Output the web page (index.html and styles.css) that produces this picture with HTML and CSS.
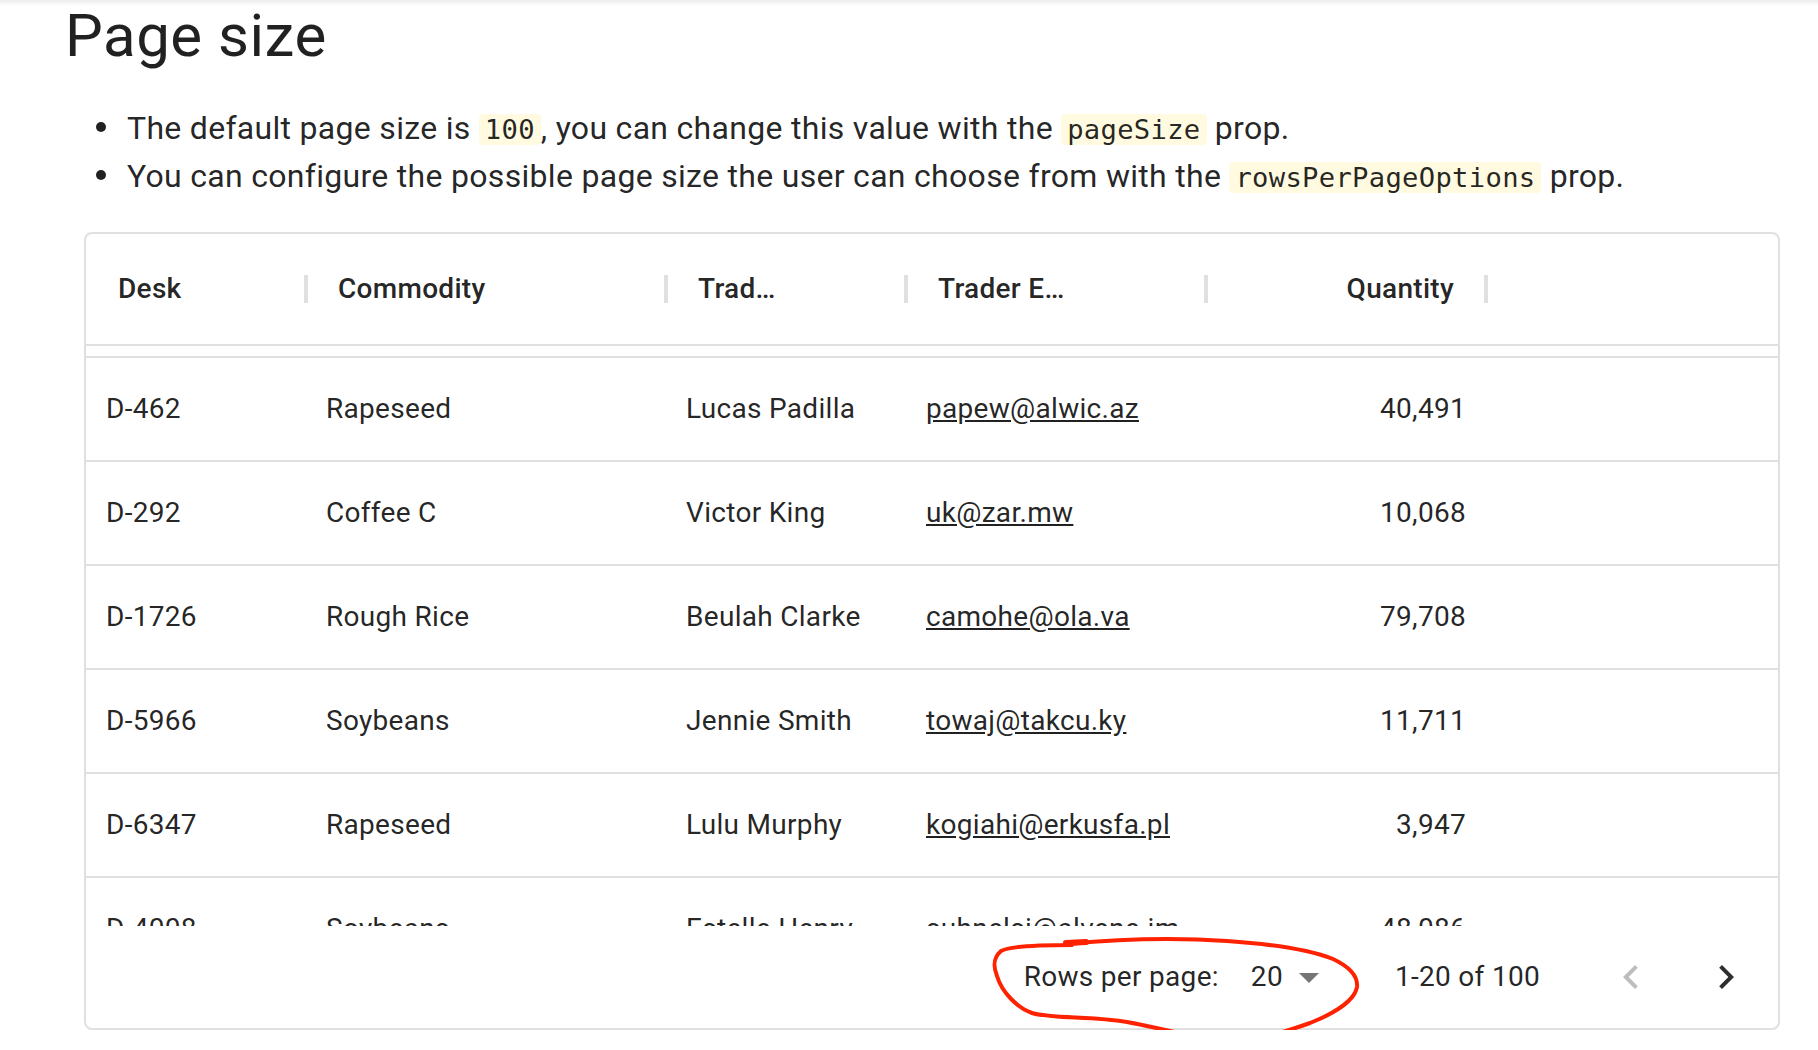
FILE: index.html
```html
<!DOCTYPE html>
<html lang="en">
<head>
<meta charset="utf-8">
<title>Page size</title>
<link rel="stylesheet" href="styles.css">
</head>
<body>
<main class="page">
  <h2 class="title">Page size</h2>
  <ul class="notes">
    <li>The default page size is <code>100</code>, you can change this value with the <code>pageSize</code> prop.</li>
    <li>You can configure the possible page size the user can choose from with the <code>rowsPerPageOptions</code> prop.</li>
  </ul>

  <div class="grid">
    <div class="grid-header">
      <div class="hcell col-desk"><span class="htitle">Desk</span></div>
      <div class="hcell col-commodity"><span class="htitle">Commodity</span></div>
      <div class="hcell col-name"><span class="htitle">Trad…</span></div>
      <div class="hcell col-email"><span class="htitle">Trader E…</span></div>
      <div class="hcell col-qty num"><span class="htitle">Quantity</span></div>
    </div>

    <div class="viewport">
      <div class="row row-stub"></div>
      <div class="row">
        <div class="cell col-desk">D-462</div>
        <div class="cell col-commodity">Rapeseed</div>
        <div class="cell col-name">Lucas Padilla</div>
        <div class="cell col-email"><a href="#">papew@alwic.az</a></div>
        <div class="cell col-qty num">40,491</div>
      </div>
      <div class="row">
        <div class="cell col-desk">D-292</div>
        <div class="cell col-commodity">Coffee C</div>
        <div class="cell col-name">Victor King</div>
        <div class="cell col-email"><a href="#">uk@zar.mw</a></div>
        <div class="cell col-qty num">10,068</div>
      </div>
      <div class="row">
        <div class="cell col-desk">D-1726</div>
        <div class="cell col-commodity">Rough Rice</div>
        <div class="cell col-name">Beulah Clarke</div>
        <div class="cell col-email"><a href="#">camohe@ola.va</a></div>
        <div class="cell col-qty num">79,708</div>
      </div>
      <div class="row">
        <div class="cell col-desk">D-5966</div>
        <div class="cell col-commodity">Soybeans</div>
        <div class="cell col-name">Jennie Smith</div>
        <div class="cell col-email"><a href="#">towaj@takcu.ky</a></div>
        <div class="cell col-qty num">11,711</div>
      </div>
      <div class="row">
        <div class="cell col-desk">D-6347</div>
        <div class="cell col-commodity">Rapeseed</div>
        <div class="cell col-name">Lulu Murphy</div>
        <div class="cell col-email"><a href="#">kogiahi@erkusfa.pl</a></div>
        <div class="cell col-qty num">3,947</div>
      </div>
      <div class="row">
        <div class="cell col-desk">D-4008</div>
        <div class="cell col-commodity">Soybeans</div>
        <div class="cell col-name">Estelle Henry</div>
        <div class="cell col-email"><a href="#">suhnelsi@alvene.im</a></div>
        <div class="cell col-qty num">48,086</div>
      </div>
    </div>

    <div class="footer">
      <span class="rpp-label">Rows per page:</span>
      <div class="select">
        <span class="select-value">20</span>
        <svg class="select-icon" viewBox="0 0 24 24" width="48" height="48"><path d="M7 10l5 5 5-5z"/></svg>
      </div>
      <span class="displayed">1-20 of 100</span>
      <div class="actions">
        <button class="icon-btn disabled" type="button" aria-label="Previous page">
          <svg viewBox="0 0 24 24" width="48" height="48"><path d="M15.41 16.59 10.83 12l4.58-4.59L14 6l-6 6 6 6z"/></svg>
        </button>
        <button class="icon-btn" type="button" aria-label="Next page">
          <svg viewBox="0 0 24 24" width="48" height="48"><path d="M8.59 16.59 13.17 12 8.59 7.41 10 6l6 6-6 6z"/></svg>
        </button>
      </div>
    </div>

    <svg class="annotation" viewBox="0 0 390 120" width="390" height="120">
      <path d="M88 15 C140 10 200 9 247 12 C290 15 330 21 353 30 C370 38 378 48 377 58 C375 70 358 83 330 94 C305 103 280 111 247 111 C222 111 190 101 147 93 C110 87 72 90 52 84 C38 79 22 64 17 47 C13 37 13 29 21 22 C30 17 60 16 92 16"/>
      <path class="tick" d="M86 14 L106 13"/>
    </svg>
  </div>
</main>
</body>
</html>
```

FILE: styles.css
```css
html, body {
  margin: 0;
  padding: 0;
}

body {
  font-family: Roboto, "Noto Sans", sans-serif;
  color: rgba(0, 0, 0, 0.87);
  background: #ffffff linear-gradient(#ececec, #ffffff 6px) no-repeat;
}

.page {
  padding: 0 38px 0 65px;
}

.title {
  margin: 0;
  font-size: 60px;
  font-weight: 400;
  line-height: 72px;
  letter-spacing: 0.5px;
}

.notes {
  margin: 32px 0 32px;
  padding-left: 62px;
  font-size: 32px;
  line-height: 48px;
  letter-spacing: 0.3px;
  list-style: none;
}

.notes li::before {
  content: "";
  display: inline-block;
  width: 10px;
  height: 10px;
  margin-left: -31px;
  margin-right: 21px;
  border-radius: 50%;
  background: currentColor;
  vertical-align: 7px;
}

code {
  font-family: "DejaVu Sans Mono", monospace;
  font-size: 85%;
  line-height: 1;
  padding: 0 6px;
  border-radius: 4px;
  background: rgba(255, 229, 100, 0.2);
}

.grid {
  position: relative;
  margin-left: 19px;
  border: 2px solid #e0e0e0;
  border-radius: 8px;
  font-size: 28px;
  line-height: 1.43;
  letter-spacing: 0.3px;
}

.grid-header {
  display: flex;
  height: 110px;
  border-bottom: 2px solid #e0e0e0;
}

.hcell {
  position: relative;
  display: flex;
  align-items: center;
  box-sizing: border-box;
  height: 100%;
  padding: 0 32px;
  font-weight: 500;
  white-space: nowrap;
}

.hcell::after {
  content: "";
  position: absolute;
  right: -2px;
  top: 41px;
  width: 4px;
  height: 28px;
  background: #e0e0e0;
}

.num {
  justify-content: flex-end;
}

.col-desk { width: 220px; }
.col-commodity { width: 360px; }
.col-name { width: 240px; }
.col-email { width: 300px; }
.col-qty { width: 280px; }

.viewport {
  height: 580px;
  overflow: hidden;
}

.row {
  display: flex;
  align-items: center;
  height: 102px;
  border-bottom: 2px solid #e0e0e0;
}

.row-stub {
  height: 10px;
}

.cell {
  display: flex;
  box-sizing: border-box;
  padding: 0 20px;
  white-space: nowrap;
  overflow: hidden;
}

.cell a {
  color: inherit;
  text-decoration: underline;
}

.footer {
  display: flex;
  align-items: center;
  justify-content: flex-end;
  height: 102px;
  padding-right: 12px;
}

.select {
  display: flex;
  align-items: center;
  margin-left: 16px;
  padding-left: 16px;
}

.select-icon {
  margin-left: 2px;
  fill: rgba(0, 0, 0, 0.54);
}

.displayed {
  margin-left: 62px;
}

.actions {
  display: flex;
  gap: 15px;
  margin-left: 51px;
}

.icon-btn {
  display: flex;
  align-items: center;
  justify-content: center;
  width: 80px;
  height: 80px;
  padding: 0;
  border: 0;
  border-radius: 50%;
  background: transparent;
  fill: rgba(0, 0, 0, 0.82);
}

.icon-btn.disabled {
  fill: rgba(0, 0, 0, 0.26);
}

.annotation {
  position: absolute;
  left: 894px;
  top: 695px;
  overflow: visible;
  fill: none;
  stroke: #ff2200;
  stroke-width: 4;
  stroke-linecap: round;
  stroke-linejoin: round;
}

.annotation .tick {
  stroke-width: 6;
}
```
